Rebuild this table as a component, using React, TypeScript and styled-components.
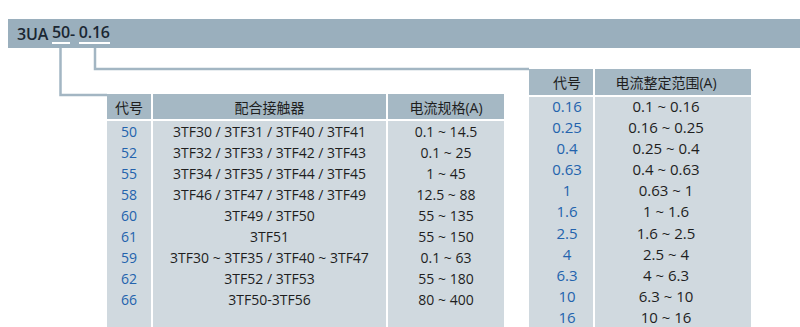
import React from "react";
import styled, { createGlobalStyle } from "styled-components";

const GlobalStyle = createGlobalStyle`
  html, body { margin: 0; padding: 0; background: #ffffff; overflow: hidden; }
  body { font-family: "Open Sans", "Noto Sans CJK SC", sans-serif; color: #1e1e1e; }
`;

const Page = styled.div`
  padding-top: 19px;
  width: 800px;
`;

const Bar = styled.div`
  margin-left: 8px;
  height: 29px;
  background: #9aafbd;
  display: flex;
  align-items: center;
  padding-left: 9px;
  font-size: 16px;
  font-weight: 600;
  letter-spacing: -0.2px;
  color: #1b2733;
  white-space: pre;
`;

const Part = styled.span`
  display: inline-block;
  line-height: 19px;
  border-bottom: 2px solid #ffffff;
`;

const Diagram = styled.div`
  position: relative;
  display: flex;
  align-items: flex-start;
  gap: 25px;
  padding: 21px 0 0 107px;
`;

const Connectors = styled.svg`
  position: absolute;
  left: 0;
  top: 0;
  overflow: visible;
`;

const Table = styled.div<{ $offset?: number }>`
  display: flex;
  flex-direction: column;
  gap: 2px;
  background: #ffffff;
  margin-top: ${(p) => p.$offset ?? 0}px;
`;

const Grid = styled.div<{ $cols: string }>`
  display: grid;
  grid-template-columns: ${(p) => p.$cols};
  column-gap: 2px;
`;

const HeadCell = styled.div<{ $h: number; $pl?: number; $pr?: number }>`
  background: #a5b8c4;
  height: ${(p) => p.$h}px;
  display: flex;
  align-items: center;
  justify-content: center;
  padding-left: ${(p) => p.$pl ?? 0}px;
  padding-right: ${(p) => p.$pr ?? 0}px;
  font-size: 14px;
  color: #1e1e1e;
  white-space: nowrap;
`;

const Cell = styled.div<{
  $h: number;
  $code?: boolean;
  $size: number;
  $pl?: number;
  $pr?: number;
  $pb?: number;
}>`
  box-sizing: border-box;
  background: #d0d9df;
  height: ${(p) => p.$h}px;
  display: flex;
  align-items: center;
  justify-content: center;
  padding-left: ${(p) => p.$pl ?? 0}px;
  padding-right: ${(p) => p.$pr ?? 0}px;
  padding-bottom: ${(p) => p.$pb ?? 0}px;
  font-size: ${(p) => p.$size}px;
  color: ${(p) => (p.$code ? "#2363ad" : "#1e1e1e")};
  white-space: nowrap;
`;

const leftRows: [string, string, string][] = [
  ["50", "3TF30 / 3TF31 / 3TF40 / 3TF41", "0.1 ~ 14.5"],
  ["52", "3TF32 / 3TF33 / 3TF42 / 3TF43", "0.1 ~ 25"],
  ["55", "3TF34 / 3TF35 / 3TF44 / 3TF45", "1 ~ 45"],
  ["58", "3TF46 / 3TF47 / 3TF48 / 3TF49", "12.5 ~ 88"],
  ["60", "3TF49 / 3TF50", "55 ~ 135"],
  ["61", "3TF51", "55 ~ 150"],
  ["59", "3TF30 ~ 3TF35 / 3TF40 ~ 3TF47", "0.1 ~ 63"],
  ["62", "3TF52 / 3TF53", "55 ~ 180"],
  ["66", "3TF50-3TF56", "80 ~ 400"],
];

const rightRows: [string, string][] = [
  ["0.16", "0.1 ~ 0.16"],
  ["0.25", "0.16 ~ 0.25"],
  ["0.4", "0.25 ~ 0.4"],
  ["0.63", "0.4 ~ 0.63"],
  ["1", "0.63 ~ 1"],
  ["1.6", "1 ~ 1.6"],
  ["2.5", "1.6 ~ 2.5"],
  ["4", "2.5 ~ 4"],
  ["6.3", "4 ~ 6.3"],
  ["10", "6.3 ~ 10"],
  ["16", "10 ~ 16"],
];

const LEFT_COLS = "44px 233px 116px";
const RIGHT_COLS = "64px 156px";

export default function App() {
  return (
    <Page>
      <GlobalStyle />
      <Bar>
        3UA <Part>50</Part>- <Part>0.16</Part>
      </Bar>
      <Diagram>
        <Connectors width="540" height="50">
          <path d="M60.5 0 V47 H107" fill="none" stroke="#a3b6c3" strokeWidth="2.5" />
          <path d="M95 0 V21 H529" fill="none" stroke="#a3b6c3" strokeWidth="2.5" />
        </Connectors>
        <Table $offset={25}>
          <Grid $cols={LEFT_COLS}>
            <HeadCell $h={25}>代号</HeadCell>
            <HeadCell $h={25}>配合接触器</HeadCell>
            <HeadCell $h={25}>电流规格(A)</HeadCell>
          </Grid>
          <Grid $cols={LEFT_COLS}>
            {leftRows.map(([c, m, r]) => (
              <React.Fragment key={c}>
                <Cell $h={21} $size={14} $code>{c}</Cell>
                <Cell $h={21} $size={14}>{m}</Cell>
                <Cell $h={21} $size={14}>{r}</Cell>
              </React.Fragment>
            ))}
            <Cell $h={20} $size={14} />
            <Cell $h={20} $size={14} />
            <Cell $h={20} $size={14} />
          </Grid>
        </Table>
        <Table>
          <Grid $cols={RIGHT_COLS}>
            <HeadCell $h={26} $pl={12}>代号</HeadCell>
            <HeadCell $h={26} $pr={14}>电流整定范围(A)</HeadCell>
          </Grid>
          <Grid $cols={RIGHT_COLS}>
            {rightRows.map(([c, r]) => (
              <React.Fragment key={c}>
                <Cell $h={21.17} $size={15} $code $pl={12} $pb={4}>{c}</Cell>
                <Cell $h={21.17} $size={15} $pr={14} $pb={4}>{r}</Cell>
              </React.Fragment>
            ))}
          </Grid>
        </Table>
      </Diagram>
    </Page>
  );
}
